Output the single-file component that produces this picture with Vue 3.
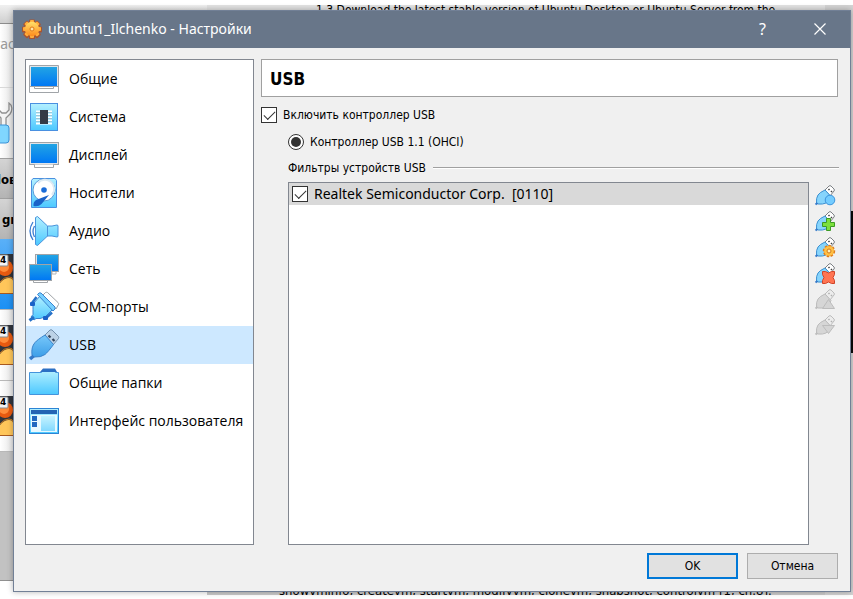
<script setup>
import { ref } from 'vue'

const sections = [
  { id: 'general', label: 'Общие' },
  { id: 'system', label: 'Система' },
  { id: 'display', label: 'Дисплей' },
  { id: 'storage', label: 'Носители' },
  { id: 'audio', label: 'Аудио' },
  { id: 'network', label: 'Сеть' },
  { id: 'serial', label: 'COM-порты' },
  { id: 'usb', label: 'USB' },
  { id: 'folders', label: 'Общие папки' },
  { id: 'interface', label: 'Интерфейс пользователя' }
]
const current = ref('usb')
const usbEnabled = ref(true)
const controller = ref('ohci')
const filterOn = ref(true)

const tools = [
  { id: 'new', label: 'Новый фильтр' },
  { id: 'add', label: 'Добавить фильтр' },
  { id: 'edit', label: 'Изменить фильтр' },
  { id: 'remove', label: 'Удалить фильтр' },
  { id: 'up', label: 'Переместить вверх', disabled: true },
  { id: 'down', label: 'Переместить вниз', disabled: true }
]
const machines = [1, 2, 3]
</script>

<template>
  <div class="desktop">
    <div class="backdrop" aria-hidden="true">
      <div class="manager">
        <div class="manager-top"></div>
        <div class="manager-menu"><span>гас</span></div>
        <div class="manager-tools">
          <svg width="13" height="44" viewBox="0 0 13 44">
            <path d="M-1 1v7l3 3h4l3-3V1c3 2 4 7 1 11l-4 4v12H1V16l-3-3" fill="#f4f4f4" stroke="#909090" stroke-width="1.3" />
            <rect x="-4" y="23" width="13" height="18" rx="3" fill="#80d6ff" stroke="#3c94d8" />
          </svg>
        </div>
        <div class="manager-head"><b>lов</b></div>
        <div class="manager-head second"><b>gr</b></div>
        <div v-for="m in machines" :key="m" class="machine" :class="{ active: m === 1 }">
          <svg width="13" height="40" viewBox="0 0 13 40">
            <rect width="13" height="40" fill="#30343c" />
            <circle cx="5" cy="14" r="8" fill="#e85a10" />
            <circle cx="4" cy="13" r="5" fill="#ff8c3a" />
            <path d="M0 39V29q4-5 9-5 4 0 4 3v12z" fill="#ffc65a" />
            <path d="M0 28q4-5 9-5 4 0 4 3" fill="none" stroke="#c87820" />
            <path d="M0 39.500h13" stroke="#a85a20" />
            <rect x="-3" y="1" width="11" height="11" rx="1" fill="#f4f4f4" stroke="#8a8a8a" />
          </svg>
          <small>4</small>
        </div>
        <div class="manager-rest"></div>
      </div>
      <div class="doc doc-top">1.3 Download the latest stable version of Ubuntu Desktop or Ubuntu Server from the</div>
      <div class="doc doc-bottom">showvminfo, createvm, startvm, modifyvm, clonevm, snapshot, controlvm [1, ch.8].</div>
      <div class="console"></div>
    </div>

    <main class="dialog">
      <header class="titlebar">
        <svg class="app-icon" width="20" height="20" viewBox="0 0 20 20">
          <defs>
            <linearGradient id="gear" x1="0" y1="0" x2="0" y2="1"><stop offset="0" stop-color="#ffe06a" /><stop offset="1" stop-color="#ff8a1c" /></linearGradient>
          </defs>
          <g fill="#a85430">
            <circle cx="10" cy="10.500" r="8" />
            <rect v-for="a in 8" :key="a" x="7" y="0.500" width="6" height="7" rx="1" :transform="`rotate(${a * 45} 10 10.500)`" />
          </g>
          <g fill="#ffae3c">
            <rect v-for="a in 8" :key="a" x="8" y="1" width="4" height="6" rx="1" :transform="`rotate(${a * 45} 10 10)`" />
          </g>
          <circle cx="10" cy="10" r="7.200" fill="url(#gear)" />
          <circle cx="10" cy="10" r="2" fill="#ffe8a8" stroke="#e07818" />
        </svg>
        <h1>ubuntu1_Ilchenko - Настройки</h1>
        <button class="caption" type="button" aria-label="Справка">?</button>
        <button class="caption" type="button" aria-label="Закрыть">
          <svg width="12" height="12" viewBox="0 0 12 12"><path d="M.5.5l11 11M11.500.5l-11 11" stroke="#fff" stroke-width="1.200" /></svg>
        </button>
      </header>

      <div class="content">
        <nav class="sections">
          <button v-for="s in sections" :key="s.id" type="button" class="section" :class="{ selected: s.id === current }" @click="current = s.id">
            <svg width="32" height="32" viewBox="0 0 32 32">
              <defs>
                <linearGradient id="scr" x1="0" y1="0" x2="0" y2="1"><stop offset="0" stop-color="#22a4e4" /><stop offset="1" stop-color="#0078f4" /></linearGradient>
                <linearGradient id="sky" x1="0" y1="0" x2="0" y2="1"><stop offset="0" stop-color="#b4f0ff" /><stop offset="1" stop-color="#4cc8ff" /></linearGradient>
                <linearGradient id="plug" x1="0" y1="0" x2="0" y2="1"><stop offset="0" stop-color="#78c8fa" /><stop offset="1" stop-color="#3c9ee8" /></linearGradient>
              </defs>
              <template v-if="s.id === 'general'">
                <path d="M1.500 2.500h29v27h-29z" fill="#fff" stroke="#a0a4a8" />
                <path d="M1 23.500h30" stroke="#a0a4a8" />
                <rect x="2" y="3" width="28" height="20" fill="#e0e4e8" />
                <rect x="3" y="4" width="26" height="19" fill="url(#scr)" />
                <path d="M6.500 24v1.500h19V24" fill="#fff" stroke="#a0a4a8" />
              </template>
              <template v-else-if="s.id === 'system'">
                <rect x="2.500" y="2.500" width="27" height="27" fill="url(#sky)" stroke="#4a90e0" />
                <path d="M8 10.500h16M8 13.500h16M8 16.500h16M8 19.500h16M8 22.500h16" stroke="#fff" stroke-width="2" />
                <path d="M8 11.500h16M8 14.500h16M8 17.500h16M8 20.500h16" stroke="#8ab4c8" stroke-width=".7" />
                <rect x="12" y="9" width="8" height="14" fill="#343a46" />
              </template>
              <template v-else-if="s.id === 'display'">
                <rect x="1.500" y="3.500" width="29" height="22" fill="#e0e4e8" stroke="#a0a4a8" />
                <rect x="3" y="5" width="26" height="19" fill="url(#scr)" />
                <path d="M6.500 25.500v3h19v-3" fill="#fff" stroke="#a0a4a8" />
              </template>
              <template v-else-if="s.id === 'storage'">
                <path d="M5 1.500h22l1.500 2v27h-25v-27z" fill="url(#sky)" stroke="#4a90e0" />
                <circle cx="16" cy="13" r="11" fill="#fff" stroke="#5a9cd8" />
                <path d="M10 6a9 9 0 0 1 14 12" fill="none" stroke="#dceaf4" stroke-width="2" />
                <circle cx="16" cy="13" r="2.800" fill="#1a6cd8" />
                <path d="M21 18L8 23q-3 2-2.500 6 5 1 8-2z" fill="#1a62c8" />
              </template>
              <template v-else-if="s.id === 'audio'">
                <path d="M7.500 2.500l2-1 10 9.500h4.500l5-1 1 .5v11l-1 .5-5-1h-4.500l-10 9.500-2-1z" fill="url(#sky)" stroke="#4a94dc" />
                <path d="M19.500 11v10.500" stroke="#4a94dc" />
                <path d="M5 7q-6 9 0 18M6.500 11q-3 5.500 0 11" fill="none" stroke="#3a7cd0" stroke-width="1.300" />
              </template>
              <template v-else-if="s.id === 'network'">
                <rect x="7.500" y="1.500" width="23" height="17" fill="#e0e4e8" stroke="#a0a4a8" />
                <rect x="9" y="2" width="21" height="16" fill="url(#scr)" />
                <path d="M24 19v2h4v-2" fill="#fff" stroke="#b0b4b8" />
                <rect x="1.500" y="11.500" width="22" height="16" fill="#e0e4e8" stroke="#a0a4a8" />
                <rect x="2" y="12" width="21" height="15" fill="url(#scr)" />
                <path d="M5.500 28v1.500h14V28" fill="#fff" stroke="#a0a4a8" />
              </template>
              <template v-else-if="s.id === 'serial'">
                <path d="M15 4l2.500-2.500q1-.5 2 0L30 11.500q1 1 .5 2L28 18z" fill="#fff" stroke="#a0a4a8" />
                <path d="M5 13l7-8 13 13-8 8-5 1.500H8L6 29l-3-3 2-2.500v-5z" fill="url(#sky)" stroke="#3a84d0" />
                <path d="M9.500 3.500Q11 1 13 2l14 14q1 2-2 4z" fill="#78d0ff" stroke="#3a84d0" />
                <path d="M8.500 6L4 12M24 21.500L18 27" stroke="#2470c8" stroke-width="2.500" />
                <rect x="2" y="11" width="5" height="4" rx="1" fill="#1a62c8" />
                <rect x="15" y="25" width="5" height="4" rx="1" fill="#1a62c8" />
                <path d="M1.500 29.500L6 26" stroke="#2470c8" stroke-width="3" />
              </template>
              <template v-else-if="s.id === 'usb'">
                <path d="M16 7l6-6q1-.5 2 0l6.500 6.500q.5 1 0 2L25 16z" fill="#bcd2e6" stroke="#7490ac" />
                <path d="M20.500 6.500l2 2M24.500 10l2 2" stroke="#34465c" stroke-width="2.200" />
                <path d="M4 26q-1-8 3-12.500Q9 11 17 6l8.500 9.500Q20 23 17 25.500 13 28.500 6 28z" fill="url(#plug)" stroke="#3a84cc" />
                <path d="M2 30l3.500-3" stroke="#3478c8" stroke-width="3.500" />
              </template>
              <template v-else-if="s.id === 'folders'">
                <path d="M1.500 5.500h12l2-2h11l1 2h3v22h-29z" fill="url(#sky)" stroke="#4494dc" />
                <path d="M12 5l3-3.500h12l2 3.500z" fill="#2c70c4" />
              </template>
              <template v-else>
                <rect x="1.500" y="3.500" width="29" height="25" fill="url(#sky)" stroke="#2c84d4" />
                <rect x="3" y="5" width="26" height="4" fill="#2464b4" />
                <rect x="3" y="10" width="26" height="17" fill="#e6f8ff" />
                <path d="M4 11h5v5H4zM4 17h5v5H4z" fill="#2068c0" />
                <rect x="13" y="11" width="14" height="15" fill="url(#sky)" opacity=".65" />
              </template>
            </svg>
            <span>{{ s.label }}</span>
          </button>
        </nav>

        <section class="page">
          <h2>USB</h2>
          <label class="option"><input v-model="usbEnabled" type="checkbox" /><span>Включить контроллер USB</span></label>
          <label class="option nested"><input v-model="controller" type="radio" name="controller" value="ohci" /><span>Контроллер USB 1.1 (OHCI)</span></label>
          <h3><span>Фильтры устройств USB</span></h3>
          <div class="filters">
            <ul>
              <li><label><input v-model="filterOn" type="checkbox" /><span>Realtek Semiconductor Corp.&nbsp; [0110]</span></label></li>
            </ul>
            <div class="tools">
              <button v-for="t in tools" :key="t.id" type="button" :aria-label="t.label" :disabled="t.disabled">
                <svg width="22" height="22" viewBox="0 0 22 22">
                  <path d="M11 5l4-4q1-.8 2 0l3 3q.8 1 0 2l-4 5z" :fill="t.disabled ? '#ececec' : '#fff'" :stroke="t.disabled ? '#bcbcbc' : '#7c8084'" />
                  <path d="M14.500 4l1 1M17 6l1 1" :stroke="t.disabled ? '#b0b0b0' : '#444'" stroke-width="1.600" />
                  <path d="M2.500 18q-.5-5 1.500-8Q5.500 7.500 11 5l6 6.500q-2 5-5 6.500t-8 1z" :fill="t.disabled ? '#d6d6d6' : '#86d4fc'" :stroke="t.disabled ? '#bcbcbc' : '#3c90d0'" />
                  <path d="M1.500 19.500l2-1.500" :stroke="t.disabled ? '#bcbcbc' : '#3478c8'" stroke-width="2" />
                  <circle v-if="t.id === 'new'" cx="16" cy="15" r="4.800" fill="#74ccff" stroke="#3c94dc" />
                  <path v-else-if="t.id === 'add'" d="M12.500 7.500h4v4h4v4h-4v4h-4v-4h-4v-4h4z" fill="#7ce03c" stroke="#3c9a24" />
                  <template v-else-if="t.id === 'edit'">
                    <circle cx="15" cy="14" r="5.200" fill="#ffb83c" stroke="#e07c1c" stroke-width="2" stroke-dasharray="2.400 1.500" />
                    <circle cx="15" cy="14" r="4.800" fill="#ffc044" />
                    <circle cx="15" cy="14" r="2" fill="#fff0b8" stroke="#d0781c" />
                  </template>
                  <path v-else-if="t.id === 'remove'" d="M8.500 8.500h3l3 1.500 3-1.500h3v3l-1.500 3 1.500 3v3h-3l-3-1.500-3 1.500h-3v-3l1.500-3-1.500-3z" fill="#ff7452" stroke="#d04428" />
                  <path v-else-if="t.id === 'up'" d="M14.500 10.500l6 9h-12z" fill="#d4d4d4" stroke="#bcbcbc" />
                  <path v-else d="M8.500 10.500h12l-6 8z" fill="#d4d4d4" stroke="#bcbcbc" />
                </svg>
              </button>
            </div>
          </div>
        </section>
      </div>

      <footer>
        <button class="push primary" type="button">OK</button>
        <button class="push" type="button">Отмена</button>
      </footer>
    </main>
  </div>
</template>

<style>
body { margin: 0; background: #fff; }
</style>

<style scoped>
* { box-sizing: border-box; }
button { font: inherit; color: inherit; margin: 0; }
.desktop {
  position: relative;
  display: flex;
  min-height: 100vh;
  padding: 10px 2px 7px 13px;
  overflow: hidden;
  font-family: "DejaVu Sans Condensed", "DejaVu Sans", sans-serif;
  font-size: 12px;
  color: #000;
}
.backdrop {
  position: absolute;
  inset: 5px 0 4px;
  overflow: hidden;
  background: #d4d4d4;
}
.manager { display: flex; flex-direction: column; width: 208px; height: 100%; background: #fff; }
.manager-top { height: 19px; background: linear-gradient(#f0f0f0, #cfcfcf); border-bottom: 1px solid #8c8c8c; }
.manager-menu { height: 64px; padding: 10px 0 0; background: linear-gradient(90deg, #fff, #e2e2e2 14px); border-bottom: 1px solid #d8d8d8; font: 14px/20px "Noto Sans", sans-serif; color: #999; }
.manager-menu span { margin-left: -6px; }
.manager-tools { height: 70px; padding-top: 14px; background: linear-gradient(90deg, #fff, #e2e2e2 14px); }
.manager-head { height: 40px; padding: 13px 0 0; background: linear-gradient(#d4d4d4, #b4b4b4); border-top: 1px solid #a0a0a0; font-size: 13px; line-height: 16px; }
.manager-head b { margin-left: -3px; }
.manager-head.second b { margin-left: 2px; }
.manager-head.second { height: 41px; }
.machine { position: relative; height: 71px; padding-top: 15px; border-bottom: 1px solid #b8b8b8; background: linear-gradient(90deg, #fff, #e4e4e4 14px); }
.machine.active { background: linear-gradient(#5ab0f8, #1c90f4); }
.machine svg { display: block; }
.machine small { position: absolute; left: 0; top: 16px; font: bold 9px/11px "DejaVu Sans", sans-serif; }
.manager-rest { flex: 1; margin-bottom: 14px; background: #c2c2c2; border-bottom: 1px solid #909090; }
.doc { position: absolute; left: 207px; width: 618px; overflow: hidden; white-space: nowrap; }
.doc-top { top: 0; height: 5px; padding-left: 109px; line-height: 10px; background: #e2e2e2; }
.doc-bottom { bottom: 0; height: 12px; padding-left: 72px; font-size: 13px; line-height: 15px; background: #cacaca; }
.console { position: absolute; right: 0; top: 206px; width: 2px; height: 142px; background: #080808; }

.dialog {
  position: relative;
  display: flex;
  flex: 1;
  flex-direction: column;
  min-width: 0;
  background: #f0f0f0;
  border: 1px solid #728096;
  box-shadow: 0 0 6px rgba(0, 0, 0, .3);
}
.titlebar { display: flex; align-items: center; height: 37px; padding: 0 2px 2px 8px; background: #687689; color: #fff; }
.app-icon { flex: none; margin-right: 6px; }
h1 { flex: 1; margin: 0; font: 14px/20px "Noto Sans", "Open Sans", sans-serif; }
.caption { display: grid; place-items: center; width: 57px; height: 35px; padding: 0; border: 0; background: none; font: 16px/20px "Noto Sans", sans-serif; color: #fff; }
.content { display: flex; flex: 1; gap: 7px; padding: 11px 12px 0 11px; }
.sections { width: 229px; flex: none; background: #fff; border: 1px solid #828790; }
.section { display: flex; align-items: center; gap: 9px; width: 100%; height: 38px; padding: 0 2px; border: 0; background: none; font: 14px/20px "Open Sans", "Noto Sans", sans-serif; text-align: left; white-space: nowrap; }
.section svg { flex: none; }
.section.selected { background: #cde8ff; }
.page { display: flex; flex: 1; flex-direction: column; min-width: 0; }
h2 { height: 38px; margin: 0 0 10px; padding-left: 8px; background: #fff; border: 1px solid #a0a0a0; font: bold 17px/38px "DejaVu Sans Condensed", "DejaVu Sans", sans-serif; }
.option { display: flex; align-items: center; gap: 6px; height: 16px; margin-bottom: 11px; }
.nested { margin: 0 0 11px 27px; }
input { appearance: none; flex: none; display: grid; place-items: center; width: 16px; height: 16px; margin: 0; background: #fff; border: 1px solid #333; }
input[type="checkbox"]:checked::before { content: ""; width: 10px; height: 5px; margin-top: -3px; border: solid #333; border-width: 0 0 1px 1px; transform: rotate(-45deg); }
input[type="radio"] { border-radius: 50%; }
input[type="radio"]:checked::before { content: ""; width: 10px; height: 10px; border-radius: 50%; background: #333; }
h3 { display: flex; align-items: center; gap: 7px; height: 14px; margin: 0 0 7px 27px; font: inherit; line-height: 14px; }
h3::after { content: ""; flex: 1; height: 2px; margin-right: -1px; background: linear-gradient(#a0a0a0 50%, #fff 50%); }
.filters { display: flex; flex: 1; gap: 5px; margin-left: 27px; }
ul { flex: 1; margin: 0; padding: 0; list-style: none; background: #fff; border: 1px solid #828790; }
li { height: 22px; background: #d9d9d9; }
li label { display: flex; align-items: center; gap: 6px; height: 22px; padding-left: 3px; font: 14px/20px "Noto Sans", "Open Sans", sans-serif; }
.tools { display: flex; flex-direction: column; gap: 4px; width: 24px; padding-top: 3px; }
.tools button { height: 22px; padding: 0; border: 0; background: none; text-align: left; }
.tools svg { display: block; }
footer { display: flex; justify-content: flex-end; gap: 9px; padding: 8px 12px 12px; }
.push { width: 91px; height: 26px; padding: 0; background: #e1e1e1; border: 1px solid #adadad; }
.primary { border: 2px solid #0078d7; }
</style>
